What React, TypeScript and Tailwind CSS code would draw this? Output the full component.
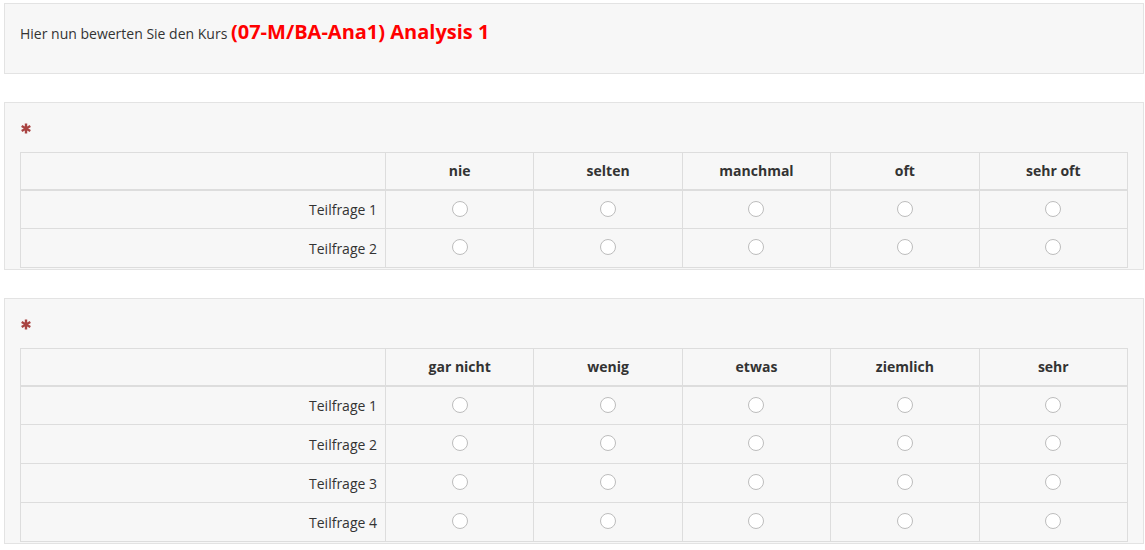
import React from "react";

const set1 = {
  cols: ["nie", "selten", "manchmal", "oft", "sehr oft"],
  rows: ["Teilfrage 1", "Teilfrage 2"],
};

const set2 = {
  cols: ["gar nicht", "wenig", "etwas", "ziemlich", "sehr"],
  rows: ["Teilfrage 1", "Teilfrage 2", "Teilfrage 3", "Teilfrage 4"],
};

function Asterisk() {
  return (
    <svg width="10" height="11" viewBox="0 0 10 11" className="block">
      <g stroke="#a94442" strokeWidth="2.4" strokeLinecap="butt">
        <line x1="5" y1="0.5" x2="5" y2="10.5" />
        <line x1="0.7" y1="3" x2="9.3" y2="8" />
        <line x1="0.7" y1="8" x2="9.3" y2="3" />
      </g>
    </svg>
  );
}

function Radio() {
  return (
    <span className="inline-block w-[16px] h-[16px] rounded-full border border-[#bdbdbd] bg-white" />
  );
}

function Question({ cols, rows }: { cols: string[]; rows: string[] }) {
  return (
    <div className="mt-[28px] bg-[#f7f7f7] border border-[#e3e3e3] pt-[20px] px-[15px] pb-[1px]">
      <div className="h-[29px] pl-[1px]">
        <Asterisk />
      </div>
      <table className="w-full border-collapse table-fixed">
        <colgroup>
          <col className="w-[365px]" />
          {cols.map((c) => (
            <col key={c} />
          ))}
        </colgroup>
        <thead>
          <tr>
            <th className="h-[37px] border border-[#dddddd] border-b-2" />
            {cols.map((c) => (
              <th
                key={c}
                className="h-[37px] border border-[#dddddd] border-b-2 text-center text-[14px] font-bold text-[#333]"
              >
                {c}
              </th>
            ))}
          </tr>
        </thead>
        <tbody>
          {rows.map((r) => (
            <tr key={r}>
              <td className="h-[39px] border border-[#dddddd] text-right pr-[8px] text-[14px] text-[#333]">
                {r}
              </td>
              {cols.map((c) => (
                <td key={c} className="h-[39px] border border-[#dddddd] text-center align-top pt-[8px]">
                  <Radio />
                </td>
              ))}
            </tr>
          ))}
        </tbody>
      </table>
    </div>
  );
}

export default function App() {
  return (
    <div
      className="bg-white min-h-[550px] pt-[3px] pl-[4px] pr-[1px]"
      style={{ fontFamily: '"Open Sans", "Noto Sans", sans-serif' }}
    >
      {/* Kurs header */}
      <div className="h-[71px] bg-[#f7f7f7] border border-[#e3e3e3] pt-[14px] px-[15px]">
        <p className="leading-[28px] text-[14px] text-[#333]">
          Hier nun bewerten Sie den Kurs{" "}
          <span className="text-[20px] font-bold text-[#ff0000]">
            (07-M/BA-Ana1) Analysis 1
          </span>
        </p>
      </div>

      <Question cols={set1.cols} rows={set1.rows} />
      <Question cols={set2.cols} rows={set2.rows} />
    </div>
  );
}
